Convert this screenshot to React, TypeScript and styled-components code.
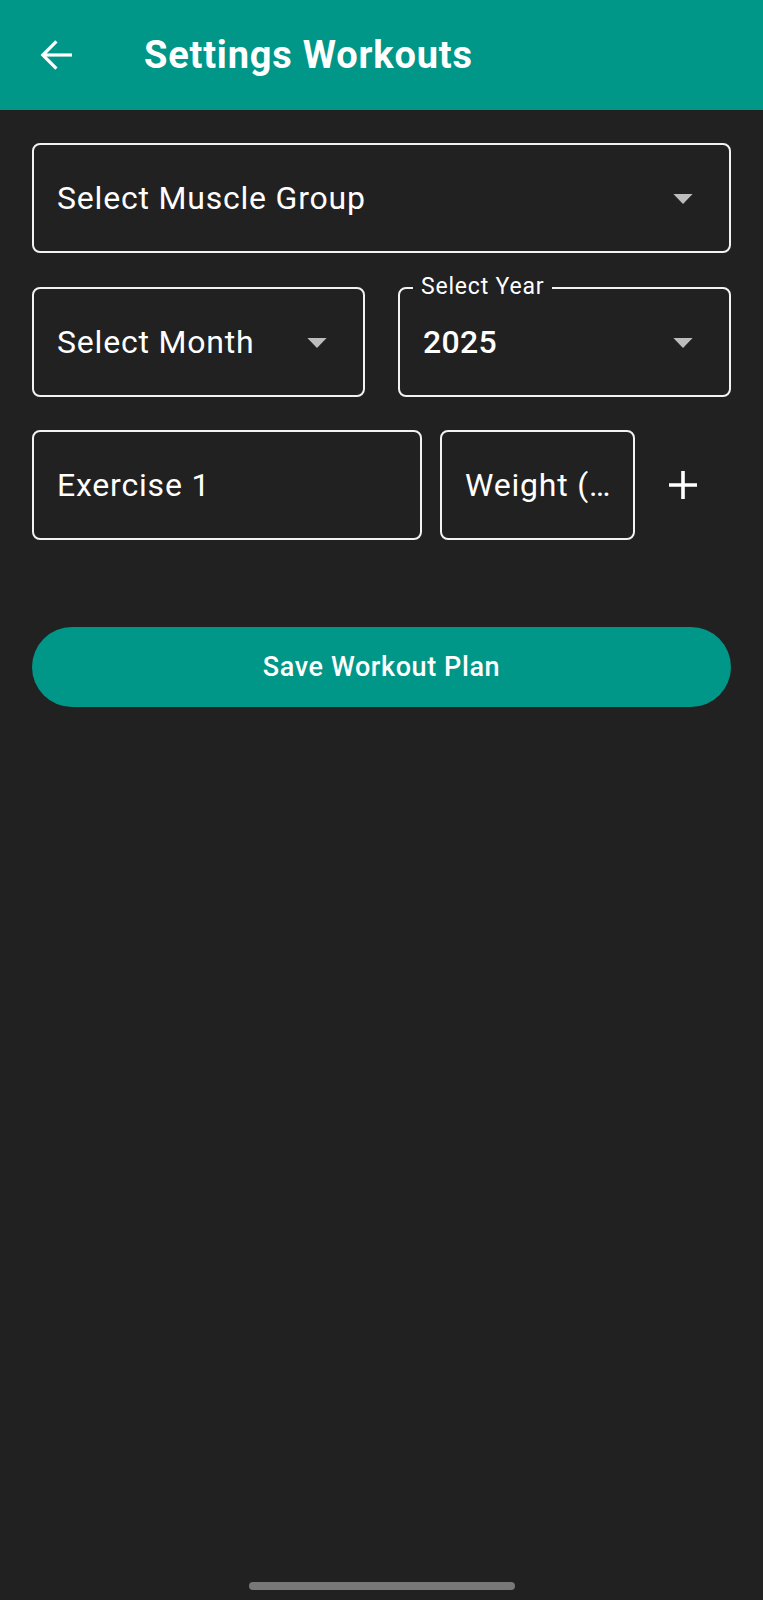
import React from "react";
import styled, { createGlobalStyle } from "styled-components";

const GlobalStyle = createGlobalStyle`
  html, body {
    margin: 0;
    padding: 0;
    background: #212121;
  }
  body {
    font-family: Roboto, "Noto Sans", "Liberation Sans", sans-serif;
    color: #ffffff;
  }
  * { box-sizing: border-box; }
`;

const Screen = styled.div`
  min-height: 100vh;
  display: flex;
  flex-direction: column;
  background: #212121;
`;

const TopBar = styled.header`
  height: 110px;
  background: #009688;
  display: flex;
  align-items: center;
  padding-left: 32px;
`;

const IconButton = styled.button`
  width: 48px;
  height: 48px;
  padding: 0;
  border: none;
  background: transparent;
  display: flex;
  align-items: center;
  justify-content: center;
  color: #ffffff;
  cursor: pointer;
`;

const Title = styled.h1`
  margin: 0 0 0 64px;
  font-size: 38px;
  font-weight: 700;
  color: #ffffff;
  letter-spacing: 0.8px;
`;

const Content = styled.main`
  flex: 1;
  display: flex;
  flex-direction: column;
  gap: 33.5px;
  padding: 33px 32px 0 32px;
`;

const TwoColumns = styled.div`
  display: grid;
  grid-template-columns: 1fr 1fr;
  column-gap: 33px;
`;

const ExerciseRow = styled.div`
  display: flex;
  align-items: center;
`;

const ExerciseFields = styled.div`
  flex: 1;
  display: grid;
  grid-template-columns: 2fr 1fr;
  column-gap: 18px;
`;

const Field = styled.div<{ $dropdown?: boolean }>`
  position: relative;
  height: 110px;
  border: 2px solid #f2f2f2;
  border-radius: 8px;
  display: flex;
  align-items: center;
  padding-left: 23px;
  padding-right: ${(p) => (p.$dropdown ? "22px" : "12px")};
  min-width: 0;
`;

const FieldText = styled.span<{ $strong?: boolean }>`
  flex: 1;
  min-width: 0;
  font-size: 32px;
  font-weight: ${(p) => (p.$strong ? 500 : 400)};
  letter-spacing: ${(p) => (p.$strong ? "0.3px" : "0.8px")};
  color: #ffffff;
  white-space: nowrap;
`;

const FloatingLabel = styled.span`
  position: absolute;
  top: -14px;
  left: 13px;
  padding: 0 8px;
  background: #212121;
  font-size: 23px;
  line-height: 23px;
  letter-spacing: 0.8px;
  color: #ffffff;
`;

const DropIcon = styled.span`
  width: 48px;
  height: 48px;
  display: flex;
  align-items: center;
  justify-content: center;
  flex-shrink: 0;
`;

const AddButton = styled(IconButton)`
  width: 96px;
  height: 96px;
`;

const SaveButton = styled.button`
  margin-top: 53px;
  height: 80px;
  width: 100%;
  border: none;
  border-radius: 40px;
  background: #009688;
  color: #ffffff;
  font-family: Roboto, "Noto Sans", sans-serif;
  font-size: 27px;
  font-weight: 500;
  letter-spacing: 0.6px;
  cursor: pointer;
`;

const BottomArea = styled.div`
  display: flex;
  justify-content: center;
  padding: 0 0 10px 0;
`;

const HomeIndicator = styled.div`
  width: 266px;
  height: 8px;
  border-radius: 4px;
  background: #787878;
`;

const BackArrow = () => (
  <svg width="48" height="48" viewBox="0 0 24 24" fill="none" stroke="#ffffff" strokeWidth="1.6" strokeLinecap="butt" strokeLinejoin="miter">
    <path d="M20 12H5.6" />
    <path d="M12.2 5.2L5.4 12l6.8 6.8" />
  </svg>
);

const Triangle = () => (
  <svg width="48" height="48" viewBox="0 0 24 24" fill="#bdbdbd">
    <path d="M7.2 10l4.8 5 4.8-5z" />
  </svg>
);

const Plus = () => (
  <svg width="48" height="48" viewBox="0 0 24 24" fill="none" stroke="#ffffff" strokeWidth="1.8">
    <path d="M12 5v14M5 12h14" />
  </svg>
);

export default function App() {
  return (
    <>
      <GlobalStyle />
      <Screen>
        <TopBar>
          <IconButton aria-label="Back">
            <BackArrow />
          </IconButton>
          <Title>Settings Workouts</Title>
        </TopBar>
        <Content>
          <Field $dropdown>
            <FieldText>Select Muscle Group</FieldText>
            <DropIcon>
              <Triangle />
            </DropIcon>
          </Field>
          <TwoColumns>
            <Field $dropdown>
              <FieldText>Select Month</FieldText>
              <DropIcon>
                <Triangle />
              </DropIcon>
            </Field>
            <Field $dropdown>
              <FloatingLabel>Select Year</FloatingLabel>
              <FieldText $strong>2025</FieldText>
              <DropIcon>
                <Triangle />
              </DropIcon>
            </Field>
          </TwoColumns>
          <ExerciseRow>
            <ExerciseFields>
              <Field>
                <FieldText>Exercise 1</FieldText>
              </Field>
              <Field>
                <FieldText>Weight (…</FieldText>
              </Field>
            </ExerciseFields>
            <AddButton aria-label="Add exercise">
              <Plus />
            </AddButton>
          </ExerciseRow>
          <SaveButton>Save Workout Plan</SaveButton>
        </Content>
        <BottomArea>
          <HomeIndicator />
        </BottomArea>
      </Screen>
    </>
  );
}
